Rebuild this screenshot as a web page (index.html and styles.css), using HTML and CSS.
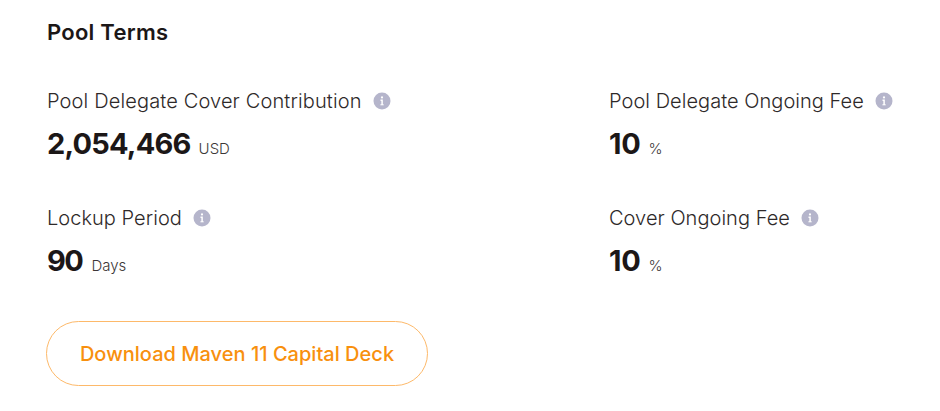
FILE: index.html
```html
<!DOCTYPE html>
<html lang="en">
<head>
    <meta charset="UTF-8">
    <meta name="viewport" content="width=device-width, initial-scale=1.0">
    <title>Pool Terms</title>
    <link rel="stylesheet" href="styles.css">
</head>
<body>
    <svg class="sprite" width="0" height="0">
        <symbol id="info" viewBox="0 0 18 18">
            <circle cx="9" cy="9" r="8.5" fill="#b5b5cb"/>
            <circle cx="9" cy="5.4" r="1.1" fill="#fff"/>
            <path d="M7.5 8.2H9.1V13" stroke="#fff" stroke-width="1.5" fill="none"/>
            <path d="M7.4 12.8H10.7" stroke="#fff" stroke-width="1" fill="none"/>
        </symbol>
    </svg>

    <div class="pool-terms">
        <h2>Pool Terms</h2>
        <div class="terms-grid">
            <div class="term">
                <div class="term-label label-cover"><span>Pool Delegate Cover Contribution</span><svg class="info"><use href="#info"/></svg></div>
                <div class="term-value"><span class="number number-cover">2,054,466</span><span class="unit">USD</span></div>
            </div>
            <div class="term">
                <div class="term-label"><span>Pool Delegate Ongoing Fee</span><svg class="info"><use href="#info"/></svg></div>
                <div class="term-value"><span class="number">10</span><span class="unit">%</span></div>
            </div>
            <div class="term">
                <div class="term-label"><span>Lockup Period</span><svg class="info"><use href="#info"/></svg></div>
                <div class="term-value"><span class="number number-lockup">90</span><span class="unit">Days</span></div>
            </div>
            <div class="term">
                <div class="term-label"><span>Cover Ongoing Fee</span><svg class="info"><use href="#info"/></svg></div>
                <div class="term-value"><span class="number">10</span><span class="unit">%</span></div>
            </div>
        </div>
        <button type="button" class="download-btn">Download Maven 11 Capital Deck</button>
    </div>
</body>
</html>
```
FILE: styles.css
```css
body {
    margin: 0;
    font-family: Inter, "Liberation Sans", sans-serif;
    background-color: #fff;
    color: #1c1717;
}

.sprite {
    display: block;
}

.pool-terms {
    padding: 18px 46px 0;
}

h2 {
    margin: 0 0 42px;
    padding-left: 1px;
    font-size: 22px;
    line-height: 28px;
    font-weight: 600;
    letter-spacing: 0.25px;
}

.terms-grid {
    display: grid;
    grid-template-columns: 562px 1fr;
    row-gap: 29px;
}

.term {
    height: 88px;
    padding-left: 1px;
}

.term-label {
    display: flex;
    align-items: center;
    height: 26px;
    font-size: 20px;
    font-weight: 300;
    letter-spacing: 0.04px;
    color: #2e2929;
    white-space: nowrap;
}

.label-cover {
    letter-spacing: 0.14px;
}

.info {
    width: 18px;
    height: 18px;
    margin-left: 11px;
}

.term-value {
    display: flex;
    align-items: baseline;
    margin-top: 12px;
    line-height: 36px;
}

.number {
    font-size: 29px;
    font-weight: 700;
    letter-spacing: -0.3px;
}

.number-cover {
    letter-spacing: -0.8px;
}

.number-lockup {
    letter-spacing: -1.5px;
}

.unit {
    margin-left: 8px;
    font-size: 15px;
    font-weight: 300;
    color: #3c3737;
}

.number-lockup + .unit {
    margin-left: 9px;
}

.download-btn {
    display: block;
    width: 382px;
    height: 65px;
    margin-top: 28px;
    padding: 0;
    border: 1px solid #fdb96a;
    border-radius: 33px;
    background-color: #fff;
    color: #f8900e;
    font-family: inherit;
    font-size: 20px;
    font-weight: 500;
    letter-spacing: 0.02px;
    cursor: pointer;
}
```
